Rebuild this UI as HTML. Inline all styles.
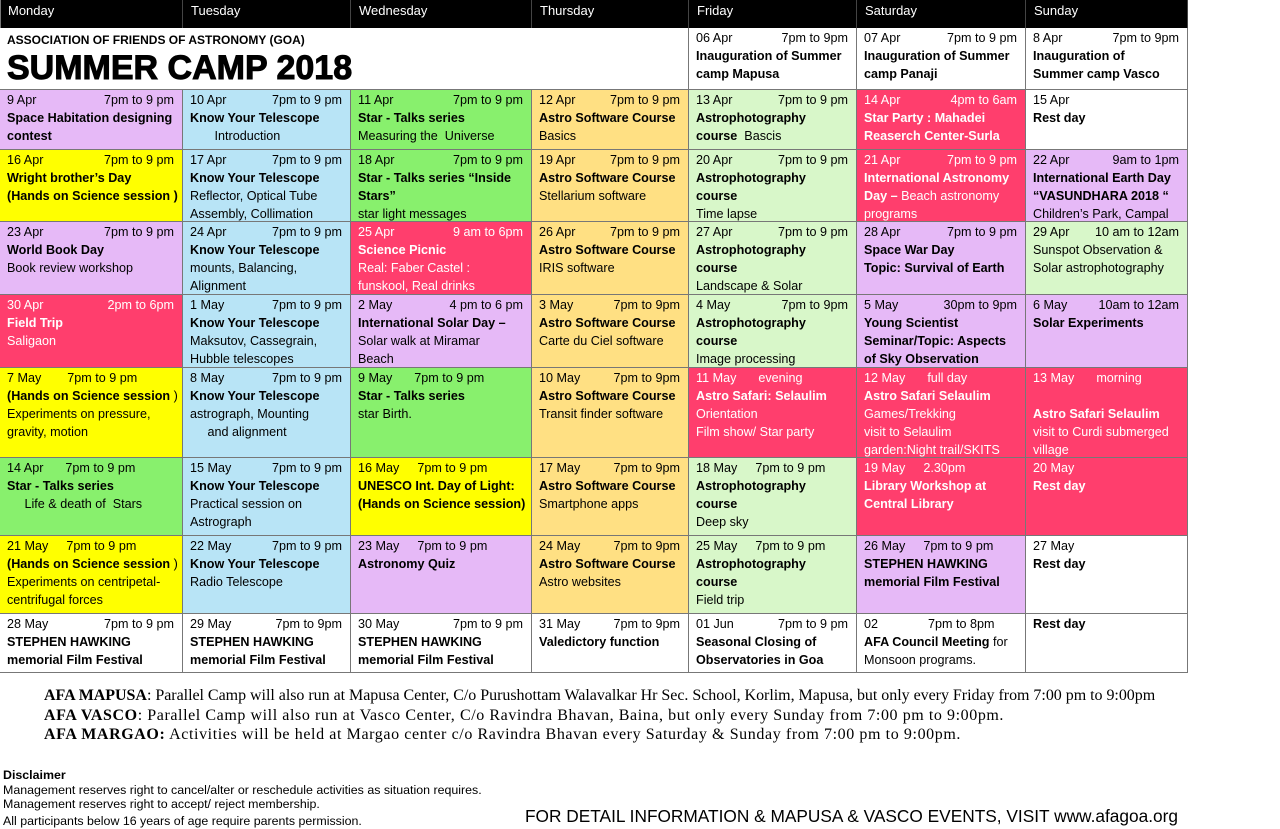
<!DOCTYPE html>
<html><head><meta charset="utf-8"><style>
*{margin:0;padding:0;box-sizing:border-box}
body{width:1280px;height:829px;background:#fff;position:relative;overflow:hidden;font-family:"Liberation Sans",sans-serif;color:#000}
.h{position:absolute;top:0;height:28px;background:#000;color:#fff;font-size:13px;padding:3px 0 0 8px;border-right:1px solid #444}
.c{position:absolute;border-right:1px solid #777;border-bottom:1px solid #777;padding:1px 6px 0 7px;font-size:12.6px;line-height:18px;white-space:nowrap;overflow:hidden}
.c div{height:18px}
.t{display:flex;justify-content:space-between;padding-right:2px}
b{font-weight:bold}
.P{background:#e6b9f7}.B{background:#b8e4f6}.G{background:#88f06d}.O{background:#ffe083}.L{background:#d8f7c9}.R{background:#ff3e6d;color:#fff}.Y{background:#ffff00}.W{background:#fff}
.ft{position:absolute;left:44px;font-family:"Liberation Serif",serif;font-size:16px;white-space:nowrap}
.ds{position:absolute;left:3px;font-size:12.4px;white-space:nowrap}
</style></head><body>
<div class="h" style="left:0;width:183px">Monday</div>
<div class="h" style="left:183px;width:168px">Tuesday</div>
<div class="h" style="left:351px;width:181px">Wednesday</div>
<div class="h" style="left:532px;width:157px">Thursday</div>
<div class="h" style="left:689px;width:168px">Friday</div>
<div class="h" style="left:857px;width:169px">Saturday</div>
<div class="h" style="left:1026px;width:162px">Sunday</div>
<div style="position:absolute;left:0;top:0;width:1px;height:673px;background:#777"></div>

<div class="c W" style="left:0;top:28px;width:689px;height:62px"><div style="font-size:12px;font-weight:bold;margin-top:2px">ASSOCIATION OF FRIENDS OF ASTRONOMY (GOA)</div><div style="font-size:34px;font-weight:900;line-height:36px;height:36px;margin-top:1px;font-family:'Liberation Sans',sans-serif;transform:scaleX(1.0);transform-origin:left;-webkit-text-stroke:1px #000">SUMMER CAMP 2018</div></div>
<div class="c W" style="left:689px;top:28px;width:168px;height:62px"><div class="t"><span>06 Apr</span><span>7pm to 9pm</span></div><div><b>Inauguration of Summer</b></div><div><b>camp Mapusa</b></div></div>
<div class="c W" style="left:857px;top:28px;width:169px;height:62px"><div class="t"><span>07 Apr</span><span>7pm to 9 pm</span></div><div><b>Inauguration of Summer</b></div><div><b>camp Panaji</b></div></div>
<div class="c W" style="left:1026px;top:28px;width:162px;height:62px"><div class="t"><span>8 Apr</span><span>7pm to 9pm</span></div><div><b>Inauguration of</b></div><div><b>Summer camp Vasco</b></div></div>

<div class="c P" style="left:0;top:90px;width:183px;height:60px"><div class="t"><span>9 Apr</span><span>7pm to 9 pm</span></div><div><b>Space Habitation designing</b></div><div><b>contest</b></div></div>
<div class="c B" style="left:183px;top:90px;width:168px;height:60px"><div class="t"><span>10 Apr</span><span>7pm to 9 pm</span></div><div><b>Know Your Telescope</b></div><div>&nbsp;&nbsp;&nbsp;&nbsp;&nbsp;&nbsp;&nbsp;Introduction</div></div>
<div class="c G" style="left:351px;top:90px;width:181px;height:60px"><div class="t"><span>11 Apr</span><span>7pm to 9 pm</span></div><div><b>Star - Talks series</b></div><div>Measuring the &nbsp;Universe</div></div>
<div class="c O" style="left:532px;top:90px;width:157px;height:60px"><div class="t"><span>12 Apr</span><span>7pm to 9 pm</span></div><div><b>Astro Software Course</b></div><div>Basics</div></div>
<div class="c L" style="left:689px;top:90px;width:168px;height:60px"><div class="t"><span>13 Apr</span><span>7pm to 9 pm</span></div><div><b>Astrophotography</b></div><div><b>course</b>&nbsp; Bascis</div></div>
<div class="c R" style="left:857px;top:90px;width:169px;height:60px"><div class="t"><span>14 Apr</span><span>4pm to 6am</span></div><div><b>Star Party : Mahadei</b></div><div><b>Reaserch Center-Surla</b></div></div>
<div class="c W" style="left:1026px;top:90px;width:162px;height:60px"><div>15 Apr</div><div><b>Rest day</b></div></div>

<div class="c Y" style="left:0;top:150px;width:183px;height:72px"><div class="t"><span>16 Apr</span><span>7pm to 9 pm</span></div><div><b>Wright brother’s Day</b></div><div><b>(Hands on Science session )</b></div></div>
<div class="c B" style="left:183px;top:150px;width:168px;height:72px"><div class="t"><span>17 Apr</span><span>7pm to 9 pm</span></div><div><b>Know Your Telescope</b></div><div>Reflector, Optical Tube</div><div>Assembly, Collimation</div></div>
<div class="c G" style="left:351px;top:150px;width:181px;height:72px"><div class="t"><span>18 Apr</span><span>7pm to 9 pm</span></div><div><b>Star - Talks series “Inside</b></div><div><b>Stars”</b></div><div>star light messages</div></div>
<div class="c O" style="left:532px;top:150px;width:157px;height:72px"><div class="t"><span>19 Apr</span><span>7pm to 9 pm</span></div><div><b>Astro Software Course</b></div><div>Stellarium software</div></div>
<div class="c L" style="left:689px;top:150px;width:168px;height:72px"><div class="t"><span>20 Apr</span><span>7pm to 9 pm</span></div><div><b>Astrophotography</b></div><div><b>course</b></div><div>Time lapse</div></div>
<div class="c R" style="left:857px;top:150px;width:169px;height:72px"><div class="t"><span>21 Apr</span><span>7pm to 9 pm</span></div><div><b>International Astronomy</b></div><div><b>Day –</b> Beach astronomy</div><div>programs</div></div>
<div class="c P" style="left:1026px;top:150px;width:162px;height:72px"><div class="t"><span>22 Apr</span><span>9am to 1pm</span></div><div><b>International Earth Day</b></div><div><b>“VASUNDHARA 2018 “</b></div><div>Children’s Park, Campal</div></div>

<div class="c P" style="left:0;top:222px;width:183px;height:73px"><div class="t"><span>23 Apr</span><span>7pm to 9 pm</span></div><div><b>World Book Day</b></div><div>Book review workshop</div></div>
<div class="c B" style="left:183px;top:222px;width:168px;height:73px"><div class="t"><span>24 Apr</span><span>7pm to 9 pm</span></div><div><b>Know Your Telescope</b></div><div>mounts, Balancing,</div><div>Alignment</div></div>
<div class="c R" style="left:351px;top:222px;width:181px;height:73px"><div class="t"><span>25 Apr</span><span>9 am to 6pm</span></div><div><b>Science Picnic</b></div><div>Real: Faber Castel :</div><div>funskool, Real drinks</div></div>
<div class="c O" style="left:532px;top:222px;width:157px;height:73px"><div class="t"><span>26 Apr</span><span>7pm to 9 pm</span></div><div><b>Astro Software Course</b></div><div>IRIS software</div></div>
<div class="c L" style="left:689px;top:222px;width:168px;height:73px"><div class="t"><span>27 Apr</span><span>7pm to 9 pm</span></div><div><b>Astrophotography</b></div><div><b>course</b></div><div>Landscape &amp; Solar</div></div>
<div class="c P" style="left:857px;top:222px;width:169px;height:73px"><div class="t"><span>28 Apr</span><span>7pm to 9 pm</span></div><div><b>Space War Day</b></div><div><b>Topic: Survival of Earth</b></div></div>
<div class="c L" style="left:1026px;top:222px;width:162px;height:73px"><div class="t"><span>29 Apr</span><span>10 am to 12am</span></div><div>Sunspot Observation &amp;</div><div>Solar astrophotography</div></div>

<div class="c R" style="left:0;top:295px;width:183px;height:73px"><div class="t"><span>30 Apr</span><span>2pm to 6pm</span></div><div><b>Field Trip</b></div><div>Saligaon</div></div>
<div class="c B" style="left:183px;top:295px;width:168px;height:73px"><div class="t"><span>1 May</span><span>7pm to 9 pm</span></div><div><b>Know Your Telescope</b></div><div>Maksutov, Cassegrain,</div><div>Hubble telescopes</div></div>
<div class="c P" style="left:351px;top:295px;width:181px;height:73px"><div class="t"><span>2 May</span><span>4 pm to 6 pm</span></div><div><b>International Solar Day –</b></div><div>Solar walk at Miramar</div><div>Beach</div></div>
<div class="c O" style="left:532px;top:295px;width:157px;height:73px"><div class="t"><span>3 May</span><span>7pm to 9pm</span></div><div><b>Astro Software Course</b></div><div>Carte du Ciel software</div></div>
<div class="c L" style="left:689px;top:295px;width:168px;height:73px"><div class="t"><span>4 May</span><span>7pm to 9pm</span></div><div><b>Astrophotography</b></div><div><b>course</b></div><div>Image processing</div></div>
<div class="c P" style="left:857px;top:295px;width:169px;height:73px"><div class="t"><span>5 May</span><span>30pm to 9pm</span></div><div><b>Young Scientist</b></div><div><b>Seminar/Topic: Aspects</b></div><div><b>of Sky Observation</b></div></div>
<div class="c P" style="left:1026px;top:295px;width:162px;height:73px"><div class="t"><span>6 May</span><span>10am to 12am</span></div><div><b>Solar Experiments</b></div></div>

<div class="c Y" style="left:0;top:368px;width:183px;height:90px"><div><span>7 May</span><span style="margin-left:26px">7pm to 9 pm</span></div><div><b>(Hands on Science session</b> )</div><div>Experiments on pressure,</div><div>gravity, motion</div></div>
<div class="c B" style="left:183px;top:368px;width:168px;height:90px"><div class="t"><span>8 May</span><span>7pm to 9 pm</span></div><div><b>Know Your Telescope</b></div><div>astrograph, Mounting</div><div>&nbsp;&nbsp;&nbsp;&nbsp;&nbsp;and alignment</div></div>
<div class="c G" style="left:351px;top:368px;width:181px;height:90px"><div><span>9 May</span><span style="margin-left:22px">7pm to 9 pm</span></div><div><b>Star - Talks series</b></div><div>star Birth.</div></div>
<div class="c O" style="left:532px;top:368px;width:157px;height:90px"><div class="t"><span>10 May</span><span>7pm to 9pm</span></div><div><b>Astro Software Course</b></div><div>Transit finder software</div></div>
<div class="c R" style="left:689px;top:368px;width:168px;height:90px"><div><span>11 May</span><span style="margin-left:22px">evening</span></div><div><b>Astro Safari: Selaulim</b></div><div>Orientation</div><div>Film show/ Star party</div></div>
<div class="c R" style="left:857px;top:368px;width:169px;height:90px"><div><span>12 May</span><span style="margin-left:22px">full day</span></div><div><b>Astro Safari Selaulim</b></div><div>Games/Trekking</div><div>visit to Selaulim</div><div>garden:Night trail/SKITS</div></div>
<div class="c R" style="left:1026px;top:368px;width:162px;height:90px"><div><span>13 May</span><span style="margin-left:22px">morning</span></div><div></div><div><b>Astro Safari Selaulim</b></div><div>visit to Curdi submerged</div><div>village</div></div>

<div class="c G" style="left:0;top:458px;width:183px;height:78px"><div><span>14 Apr</span><span style="margin-left:22px">7pm to 9 pm</span></div><div><b>Star - Talks series</b></div><div>&nbsp;&nbsp;&nbsp;&nbsp;&nbsp;Life &amp; death of &nbsp;Stars</div></div>
<div class="c B" style="left:183px;top:458px;width:168px;height:78px"><div class="t"><span>15 May</span><span>7pm to 9 pm</span></div><div><b>Know Your Telescope</b></div><div>Practical session on</div><div>Astrograph</div></div>
<div class="c Y" style="left:351px;top:458px;width:181px;height:78px"><div><span>16 May</span><span style="margin-left:18px">7pm to 9 pm</span></div><div><b>UNESCO Int. Day of Light:</b></div><div><b>(Hands on Science session)</b></div></div>
<div class="c O" style="left:532px;top:458px;width:157px;height:78px"><div class="t"><span>17 May</span><span>7pm to 9pm</span></div><div><b>Astro Software Course</b></div><div>Smartphone apps</div></div>
<div class="c L" style="left:689px;top:458px;width:168px;height:78px"><div><span>18 May</span><span style="margin-left:18px">7pm to 9 pm</span></div><div><b>Astrophotography</b></div><div><b>course</b></div><div>Deep sky</div></div>
<div class="c R" style="left:857px;top:458px;width:169px;height:78px"><div><span>19 May</span><span style="margin-left:18px">2.30pm</span></div><div><b>Library Workshop at</b></div><div><b>Central Library</b></div></div>
<div class="c R" style="left:1026px;top:458px;width:162px;height:78px"><div>20 May</div><div><b>Rest day</b></div></div>

<div class="c Y" style="left:0;top:536px;width:183px;height:78px"><div><span>21 May</span><span style="margin-left:18px">7pm to 9 pm</span></div><div><b>(Hands on Science session</b> )</div><div>Experiments on centripetal-</div><div>centrifugal forces</div></div>
<div class="c B" style="left:183px;top:536px;width:168px;height:78px"><div class="t"><span>22 May</span><span>7pm to 9 pm</span></div><div><b>Know Your Telescope</b></div><div>Radio Telescope</div></div>
<div class="c P" style="left:351px;top:536px;width:181px;height:78px"><div><span>23 May</span><span style="margin-left:18px">7pm to 9 pm</span></div><div><b>Astronomy Quiz</b></div></div>
<div class="c O" style="left:532px;top:536px;width:157px;height:78px"><div class="t"><span>24 May</span><span>7pm to 9pm</span></div><div><b>Astro Software Course</b></div><div>Astro websites</div></div>
<div class="c L" style="left:689px;top:536px;width:168px;height:78px"><div><span>25 May</span><span style="margin-left:18px">7pm to 9 pm</span></div><div><b>Astrophotography</b></div><div><b>course</b></div><div>Field trip</div></div>
<div class="c P" style="left:857px;top:536px;width:169px;height:78px"><div><span>26 May</span><span style="margin-left:18px">7pm to 9 pm</span></div><div><b>STEPHEN HAWKING</b></div><div><b>memorial Film Festival</b></div></div>
<div class="c W" style="left:1026px;top:536px;width:162px;height:78px"><div>27 May</div><div><b>Rest day</b></div></div>

<div class="c W" style="left:0;top:614px;width:183px;height:59px"><div class="t"><span>28 May</span><span>7pm to 9 pm</span></div><div><b>STEPHEN HAWKING</b></div><div><b>memorial Film Festival</b></div></div>
<div class="c W" style="left:183px;top:614px;width:168px;height:59px"><div class="t"><span>29 May</span><span>7pm to 9pm</span></div><div><b>STEPHEN HAWKING</b></div><div><b>memorial Film Festival</b></div></div>
<div class="c W" style="left:351px;top:614px;width:181px;height:59px"><div class="t"><span>30 May</span><span>7pm to 9 pm</span></div><div><b>STEPHEN HAWKING</b></div><div><b>memorial Film Festival</b></div></div>
<div class="c W" style="left:532px;top:614px;width:157px;height:59px"><div class="t"><span>31 May</span><span>7pm to 9pm</span></div><div><b>Valedictory function</b></div></div>
<div class="c W" style="left:689px;top:614px;width:168px;height:59px"><div class="t"><span>01 Jun</span><span>7pm to 9 pm</span></div><div><b>Seasonal Closing of</b></div><div><b>Observatories in Goa</b></div></div>
<div class="c W" style="left:857px;top:614px;width:169px;height:59px"><div><span>02</span><span style="margin-left:50px">7pm to 8pm</span></div><div><b>AFA Council Meeting</b> for</div><div>Monsoon programs.</div></div>
<div class="c W" style="left:1026px;top:614px;width:162px;height:59px"><div><b>Rest day</b></div></div>

<div class="ft" style="top:687px;letter-spacing:-0.03px"><b>AFA MAPUSA</b>: Parallel Camp will also run at Mapusa Center, C/o Purushottam Walavalkar Hr Sec. School, Korlim, Mapusa, but only every Friday from 7:00 pm to 9:00pm</div>
<div class="ft" style="top:707px;letter-spacing:0.58px"><b>AFA VASCO</b>: Parallel Camp will also run at Vasco Center, C/o Ravindra Bhavan, Baina, but only every Sunday from 7:00 pm to 9:00pm.</div>
<div class="ft" style="top:726px;letter-spacing:0.6px"><b>AFA MARGAO:</b> Activities will be held at Margao center c/o Ravindra Bhavan every Saturday &amp; Sunday from 7:00 pm to 9:00pm.</div>

<div class="ds" style="top:768px;font-weight:bold">Disclaimer</div>
<div class="ds" style="top:783px">Management reserves right to cancel/alter or reschedule activities as situation requires.</div>
<div class="ds" style="top:797px">Management reserves right to accept/ reject membership.</div>
<div class="ds" style="top:814px">All participants below 16 years of age require parents permission.</div>
<div style="position:absolute;left:525px;top:806px;font-size:17.3px;white-space:nowrap">FOR DETAIL INFORMATION &amp; MAPUSA &amp; VASCO EVENTS, VISIT www.afagoa.org</div>
</body></html>
